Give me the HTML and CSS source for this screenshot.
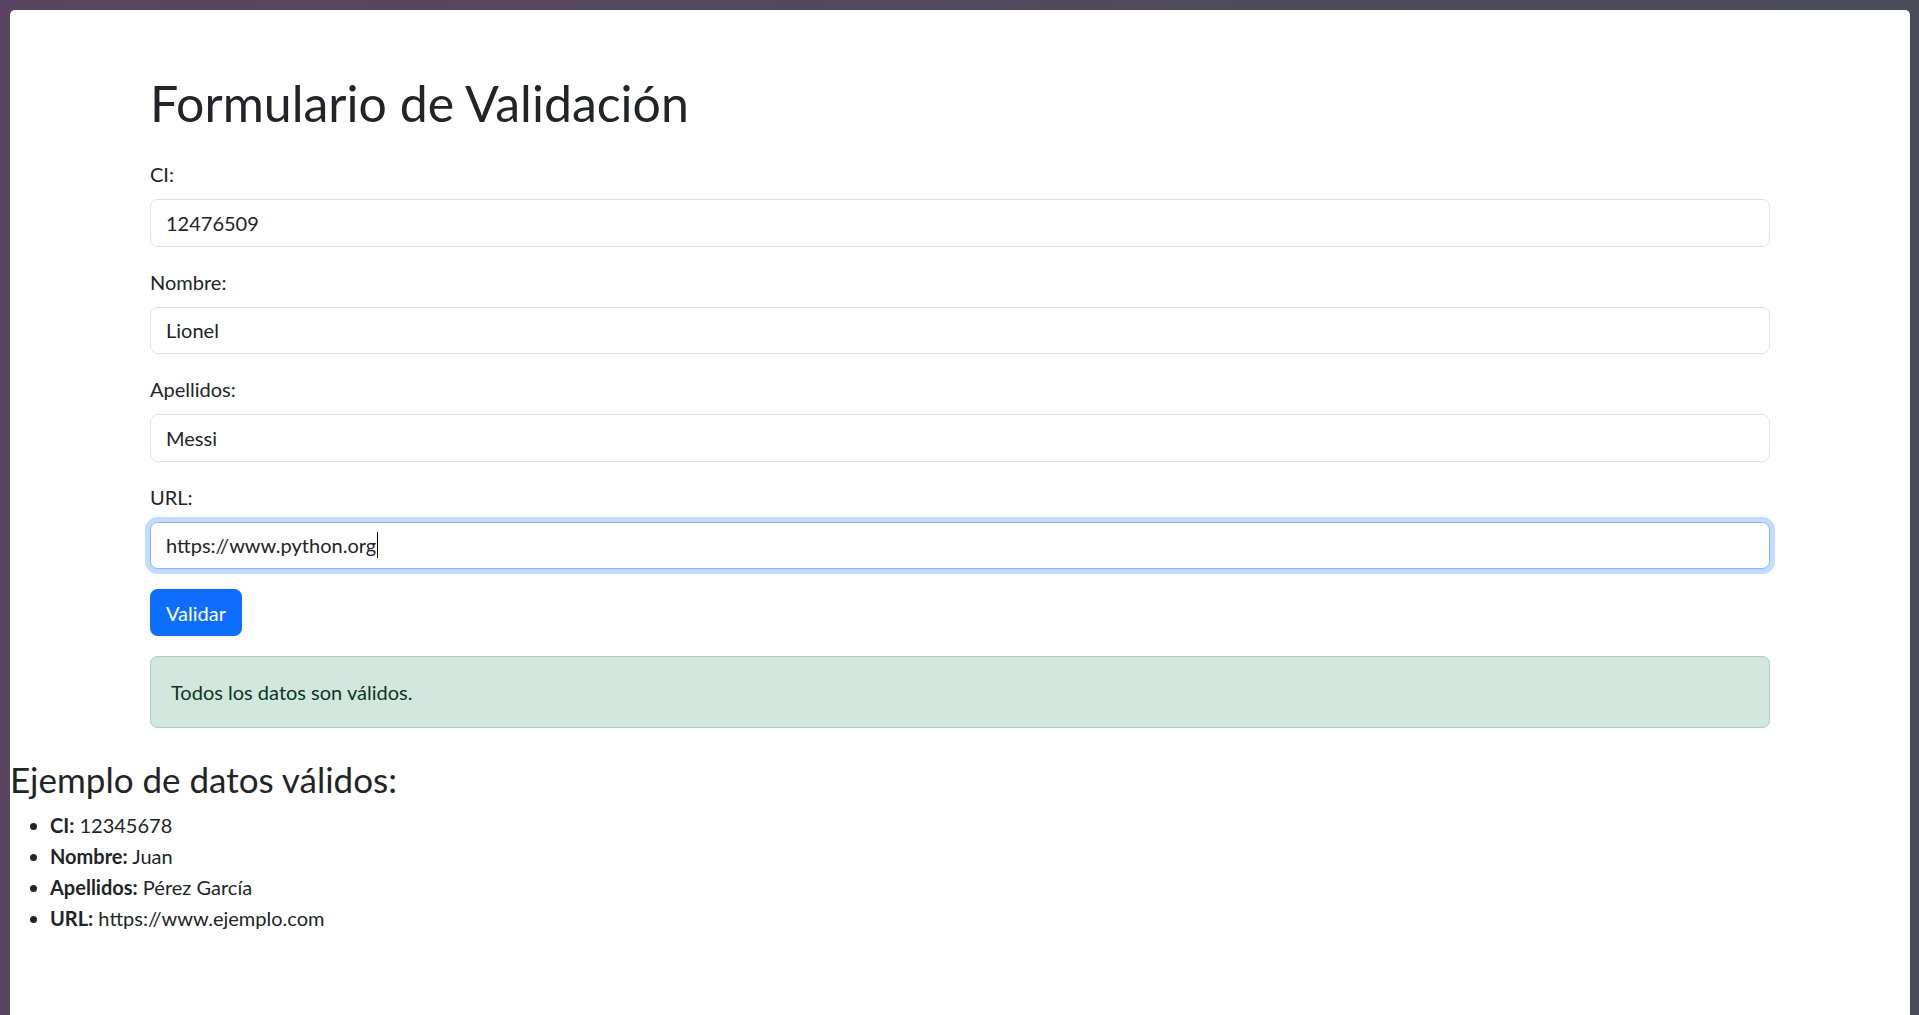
FILE: index.html
```html
<!DOCTYPE html>
<html lang="es">
<head>
<meta charset="utf-8">
<title>Formulario de Validación</title>
<link rel="stylesheet" href="styles.css">
</head>
<body>
<div class="window">
  <div class="container">
    <h1 class="title">Formulario de Validación</h1>
    <form class="form">
      <div class="group">
        <label class="label" for="ci">CI:</label>
        <input class="input" id="ci" type="text" value="12476509">
      </div>
      <div class="group">
        <label class="label" for="nombre">Nombre:</label>
        <input class="input" id="nombre" type="text" value="Lionel">
      </div>
      <div class="group">
        <label class="label" for="apellidos">Apellidos:</label>
        <input class="input" id="apellidos" type="text" value="Messi">
      </div>
      <div class="group">
        <label class="label" for="url">URL:</label>
        <div class="input input-focus"><span>https://www.python.org</span><span class="caret"></span></div>
      </div>
      <button class="btn" type="button">Validar</button>
    </form>
    <div class="alert">Todos los datos son válidos.</div>
  </div>
  <h2 class="subtitle">Ejemplo de datos válidos:</h2>
  <ul class="list">
    <li><strong>CI:</strong> 12345678</li>
    <li><strong>Nombre:</strong> Juan</li>
    <li><strong>Apellidos:</strong> Pérez García</li>
    <li><strong>URL:</strong> https://www.ejemplo.com</li>
  </ul>
</div>
</body>
</html>
```

FILE: styles.css
```css
* { box-sizing: border-box; }
html, body {
  margin: 0;
  height: 100%;
}
body {
  background: linear-gradient(90deg, #594562 0%, #524a5e 50%, #4a4c58 100%);
  font-family: "Segoe UI", "Lato", "Open Sans", sans-serif;
  color: #212529;
  font-size: 20px;
  line-height: 1.5;
  overflow: hidden;
}
.window {
  margin: 10px 9px 0 10px;
  background: #fff;
  border-top-left-radius: 5px;
  border-top-right-radius: 5px;
  min-height: 1100px;
  padding-top: 63px;
}
.container {
  max-width: 1650px;
  margin: 0 auto;
  padding: 0 15px;
}
.title {
  margin: 0 0 26px;
  font-size: 50px;
  font-weight: 400;
  line-height: 1.2;
}
.group {
  margin-bottom: 20px;
}
.label {
  display: block;
  margin-bottom: 10px;
}
.input {
  display: block;
  width: 100%;
  height: 47.5px;
  padding: 7.5px 15px;
  font: inherit;
  color: #212529;
  background: #fff;
  border: 1px solid #dee2e6;
  border-radius: 7.5px;
  outline: none;
}
.input-focus {
  border-color: #86b7fe;
  box-shadow: 0 0 0 5px rgba(13, 110, 253, 0.25);
  display: flex;
  align-items: center;
}
.caret {
  display: inline-block;
  width: 1px;
  height: 26px;
  background: #000;
  margin-left: 1px;
}
.btn {
  display: inline-block;
  font: inherit;
  color: #fff;
  background: #0d6efd;
  border: 1px solid #0d6efd;
  border-radius: 7.5px;
  padding: 7.5px 15px;
  cursor: pointer;
}
.alert {
  margin: 20px 0 20px;
  padding: 20px;
  border: 1px solid #a3cfbb;
  border-radius: 7.5px;
  background: #d1e7dd;
  color: #0a3622;
}
.subtitle {
  margin: 30px 0 10px;
  font-size: 35px;
  font-weight: 400;
  line-height: 1.2;
}
.list {
  margin: 0;
  padding-left: 40px;
  line-height: 31px;
}
.list strong { font-weight: 700; }
```
